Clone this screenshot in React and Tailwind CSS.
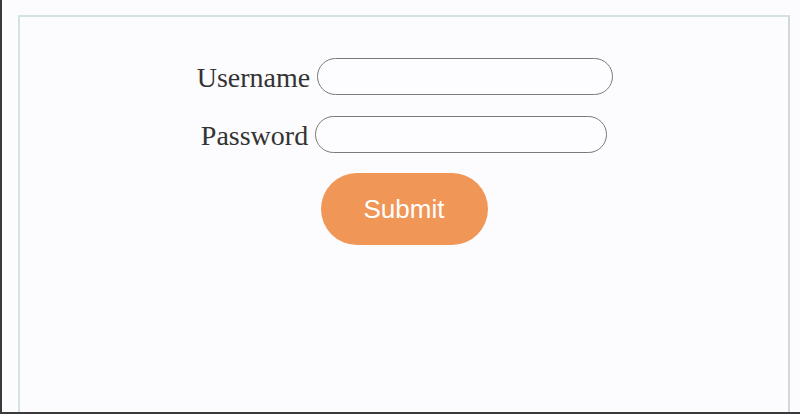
import React, { useState } from 'react';

const labelCls = "text-[28px] leading-[32px] text-[#333] font-['Liberation_Serif','Times_New_Roman',serif] translate-y-[1px]";
const inputCls = "h-[37px] rounded-full border-[1.5px] border-[#7a7a7a] bg-[#fdfcfe] px-4 text-lg outline-none";

const App = () => {
  const [form, setForm] = useState({ username: '', password: '' });

  const handleSubmit = (e) => {
    e.preventDefault();
  };

  return (
    <div className="h-[414px] w-[800px] overflow-hidden bg-[#fcfbfd] border-l-2 border-b-2 border-[#3a3a3a]">
      <div className="ml-4 mt-[15px] h-[397px] w-[772px] border-t-2 border-l-2 border-r-2 border-t-[#d3e3e1] border-l-[#d3e3e1] border-r-[#d2d7da]">
        <form onSubmit={handleSubmit} className="flex flex-col items-center pt-[41px]">
          <div className="flex items-center gap-[7px] translate-x-[1px]">
            <label htmlFor="username" className={labelCls}>Username</label>
            <input
              id="username"
              type="text"
              value={form.username}
              onChange={(e) => setForm({ ...form, username: e.target.value })}
              className={`${inputCls} w-[296px]`}
            />
          </div>
          <div className="mt-[21px] flex items-center gap-[7px]">
            <label htmlFor="password" className={labelCls}>Password</label>
            <input
              id="password"
              type="password"
              value={form.password}
              onChange={(e) => setForm({ ...form, password: e.target.value })}
              className={`${inputCls} w-[292px]`}
            />
          </div>
          <button
            type="submit"
            className="mt-5 h-[72px] w-[167px] rounded-full bg-[#f09657] text-[26px] text-white font-['Liberation_Sans',Arial,sans-serif]"
          >
            Submit
          </button>
        </form>
      </div>
    </div>
  );
};

export default App;
